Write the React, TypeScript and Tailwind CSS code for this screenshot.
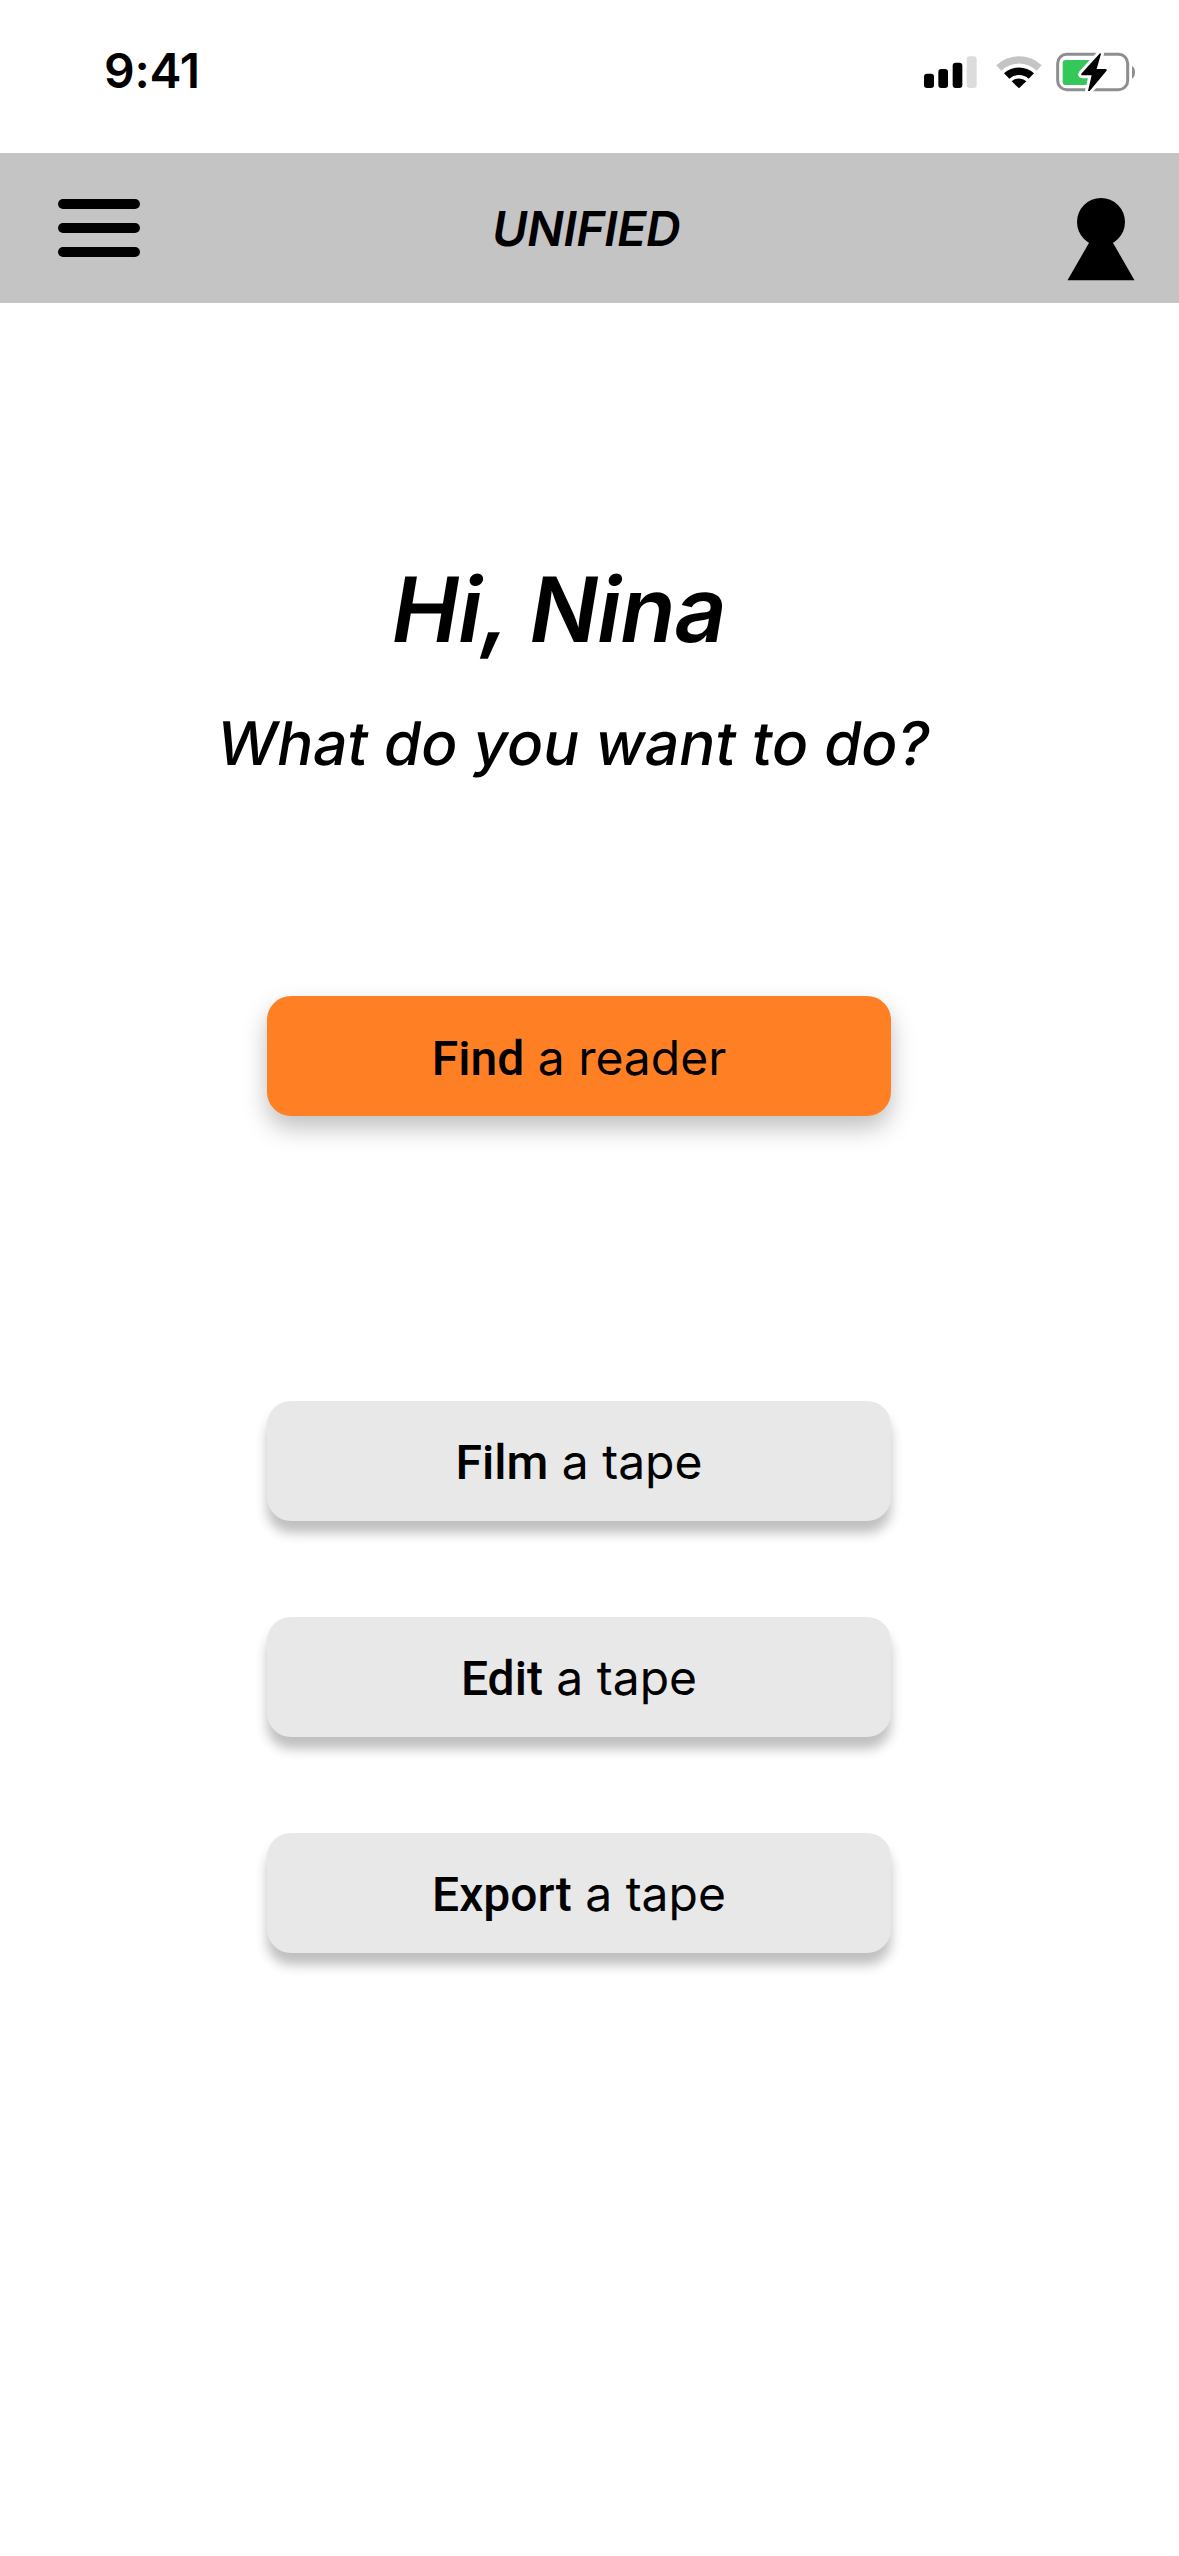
const actions = [
    { verb: "Film", rest: "a tape" },
    { verb: "Edit", rest: "a tape" },
    { verb: "Export", rest: "a tape" },
];

function StatusIcons() {
    return (
        <svg className="w-[212px] h-10" viewBox="72 66 636 120" fill="none">
            {/* Signal */}
            <rect x="72" y="131" width="30" height="43" rx="9" fill="#000" />
            <rect x="115" y="117" width="29" height="57" rx="9" fill="#000" />
            <rect x="158" y="98" width="29" height="76" rx="9" fill="#000" />
            <rect x="200" y="79" width="30" height="95" rx="9" fill="#dcdcdc" />

            {/* Wifi */}
            <path d="M289 106 A98 98 0 0 1 425 106 L410 122 A77 77 0 0 0 304 122 Z" fill="#c4c4c4" />
            <path d="M312 130 A66 66 0 0 1 402 130 L386 146 A44 44 0 0 0 328 146 Z" fill="#000" />
            <path d="M335 154 A32 32 0 0 1 379 154 L357 175 Z" fill="#000" />

            {/* Battery */}
            <rect x="473" y="73" width="210" height="106" rx="27" stroke="#8e8e8e" strokeWidth="9" />
            <path d="M696 108 C702 111 705 118 705 127 C705 136 702 143 696 146 Z" fill="#8e8e8e" />
            <rect x="488" y="90" width="88" height="75" rx="10" fill="#34c759" />
            <path
                d="M600 70 L545 130 Q541 136 548 136 L575 136 L564 183 L569 183 L619 123 Q623 117 616 117 L590 117 L603 71 Z"
                fill="#000"
                stroke="#fff"
                strokeWidth="18"
                strokeLinejoin="round"
            />
            <path
                d="M600 70 L545 130 Q541 136 548 136 L575 136 L564 183 L569 183 L619 123 Q623 117 616 117 L590 117 L603 71 Z"
                fill="#000"
            />
        </svg>
    );
}

export default function App() {
    return (
        <div className="w-[1179px] h-[2556px] bg-white text-black font-['Inter',sans-serif] overflow-hidden">
            {/* Status Bar */}
            <div className="h-[153px] pl-[104px] pr-[43px] pt-[52px] flex justify-between items-start">
                <span className="text-[48px] leading-[38px] font-semibold tracking-[-0.2px]">9:41</span>
                <StatusIcons />
            </div>

            {/* Nav */}
            <nav className="h-[150px] bg-[#c4c4c4] pl-[58px] pr-11 flex items-center justify-between">
                <button className="w-[82px] flex flex-col gap-[14px]" aria-label="Menu">
                    <span className="h-[10px] w-full rounded-full bg-black" />
                    <span className="h-[10px] w-full rounded-full bg-black" />
                    <span className="h-[10px] w-full rounded-full bg-black" />
                </button>
                <span className="text-[48px] leading-[58px] pt-[2px] mr-8 font-semibold tracking-[-0.3px] -skew-x-[9.4deg]">UNIFIED</span>
                <svg className="w-[68px] h-[83px] mt-[23px]" viewBox="0 0 68 83">
                    <circle cx="34" cy="24" r="24" />
                    <path d="M34 24 L67.5 82.3 H0.5 Z" />
                </svg>
            </nav>

            {/* Greeting */}
            <header className="pt-[252px] flex flex-col items-center">
                <h1 className="text-[90px] leading-[110px] font-semibold tracking-[-0.6px] mr-[59px] -skew-x-[9.4deg]">Hi, Nina</h1>
                <p className="text-[60px] leading-[72px] font-medium tracking-[0.05px] mt-[42px] mr-[30px] -skew-x-[9.4deg]">What do you want to do?</p>
            </header>

            {/* Actions */}
            <main className="w-[624px] ml-[267px] mt-[217px] text-[48px] leading-[58px]">
                <button className="w-full h-[120px] pt-1 rounded-3xl bg-[#ff8024] shadow-[0_12px_24px_rgba(0,0,0,0.25)]">
                    <b className="font-[550] font-['Roboto',sans-serif]">Find</b> a reader
                </button>
                <div className="mt-[285px] flex flex-col gap-24">
                    {actions.map((a) => (
                        <button key={a.verb} className="h-[120px] pt-[2px] rounded-3xl bg-[#e8e8e8] shadow-[0_12px_12px_rgba(0,0,0,0.25)]">
                            <b className="font-[550] font-['Roboto',sans-serif]">{a.verb}</b> {a.rest}
                        </button>
                    ))}
                </div>
            </main>
        </div>
    );
}
